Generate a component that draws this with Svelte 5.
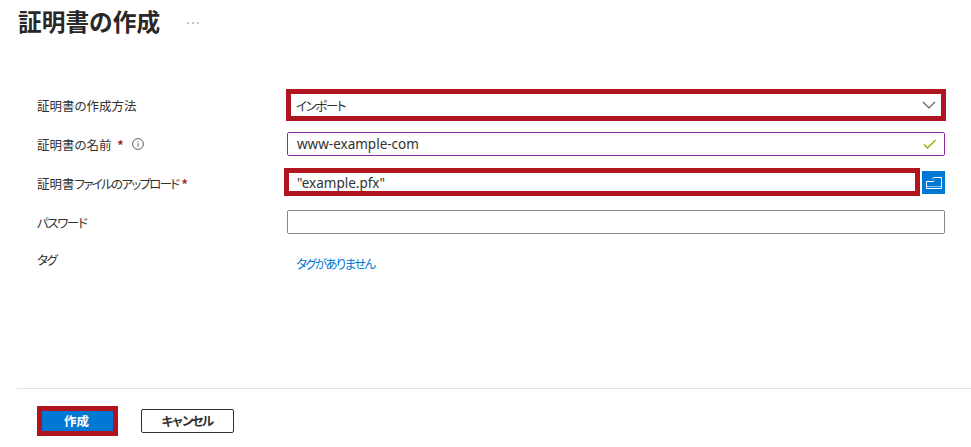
<script>
    const noTags = "タグがありません";
</script>

<main class="page">
    <header class="head">
        <h1>証明書の作成</h1>
        <button class="more" aria-label="その他">
            <svg width="12" height="2" viewBox="0 0 12 2"><circle cx="1" cy="1" r="0.7" /><circle cx="6" cy="1" r="0.7" /><circle cx="11" cy="1" r="0.7" /></svg>
        </button>
    </header>

    <form class="form">
        <div class="label">証明書の作成方法</div>
        <div class="field select">
            <span class="kana">インポート</span>
            <svg class="chev" width="14" height="8" viewBox="0 0 14 8"><path d="M1 1l6 6 6-6" /></svg>
            <i class="mark mark-select"></i>
        </div>

        <div class="label">
            証明書の名前 <b class="req">*</b>
            <svg class="info" width="12" height="12" viewBox="0 0 12 12">
                <circle cx="6" cy="6" r="5.4" />
                <path d="M6 5.2v3.6M6 3.2v1" />
            </svg>
        </div>
        <div class="field valid">
            <span>www-example-com</span>
            <svg class="check" width="13" height="10" viewBox="0 0 13 10"><path d="M1 5.5l3.5 3.5 8-8" /></svg>
        </div>

        <div class="label">証明書<span class="kana tight">ファイルのアップロード</span><b class="req near">*</b></div>
        <div class="file-row">
            <div class="field file">
                <span>"example.pfx"</span>
                <i class="mark mark-file"></i>
            </div>
            <button type="button" class="browse" aria-label="参照">
                <svg width="16" height="12" viewBox="0 0 16 12">
                    <path d="M.5 4.5h7l1-1M.5 4.5v7h15V.5h-8l-1 1.5" />
                    <path class="dim" d="M1 9.5h14" />
                </svg>
            </button>
        </div>

        <div class="label"><span class="kana">パスワード</span></div>
        <div class="field"></div>

        <div class="label tag-label"><span class="kana">タグ</span></div>
        <div class="tags"><a class="kana tight" href="#tags">{noTags}</a></div>
    </form>

    <footer class="foot">
        <button type="button" class="primary">作成<i class="mark mark-create"></i></button>
        <button type="button" class="cancel">キャンセル</button>
    </footer>
</main>

<style>
    :global(body) {
        background: #fff;
    }
    .page {
        width: 971px;
        height: 447px;
        display: flex;
        flex-direction: column;
        overflow: hidden;
        font-family: "Noto Sans", "Noto Sans CJK JP", sans-serif;
        font-size: 12.5px;
        color: #323130;
        font-feature-settings: "palt";
    }
    .kana {
        letter-spacing: -1.4px;
    }
    .tight {
        letter-spacing: -1.7px;
    }

    /**
        Page title
    **/
    .head {
        display: flex;
        align-items: center;
        gap: 27px;
        height: 43px;
        padding: 0 0 0 18px;
        margin-bottom: 50px;
    }
    h1 {
        margin: 0;
        font-family: "Noto Sans CJK JP", sans-serif;
        font-size: 23.7px;
        font-weight: 700;
        line-height: 43px;
        color: #292827;
        font-feature-settings: normal;
    }
    .more {
        display: flex;
        padding: 0;
        margin-top: 3px;
        border: none;
        background: none;
    }
    .more svg {
        fill: #605e5c;
    }

    /**
        Form rows
    **/
    .form {
        display: grid;
        grid-template-columns: 250px 658px;
        grid-auto-rows: 24px;
        row-gap: 15px;
        padding-left: 37px;
    }
    .label {
        display: flex;
        align-items: center;
        font-family: "Noto Sans CJK JP", sans-serif;
        white-space: pre;
    }
    .req {
        margin-left: 3px;
        font-weight: 700;
        color: #a4262c;
    }
    .near {
        margin-left: 3px;
    }
    .info {
        margin-left: 8px;
        fill: none;
        stroke: #605e5c;
        stroke-width: 1;
    }
    .field {
        position: relative;
        display: flex;
        align-items: center;
        justify-content: space-between;
        box-sizing: border-box;
        height: 24px;
        padding: 0 8px 0 9px;
        border: 1px solid #8a8886;
        border-radius: 2px;
        background: #fff;
        font-size: 13.5px;
    }
    .select {
        font-family: "Noto Sans CJK JP", sans-serif;
        font-size: 12.5px;
        padding-left: 8px;
        border-color: transparent;
    }
    .chev {
        fill: none;
        stroke: #605e5c;
        stroke-width: 1.1;
    }
    .valid {
        border-color: #8c2aa5;
    }
    .check {
        fill: none;
        stroke: #7fba00;
        stroke-width: 1.3;
    }
    .file-row {
        display: flex;
        justify-content: space-between;
    }
    .file {
        width: 632px;
        border-color: transparent;
    }
    .browse {
        display: flex;
        align-items: center;
        justify-content: center;
        width: 23px;
        height: 23px;
        padding: 0;
        border: none;
        background: #0078d4;
    }
    .browse svg {
        fill: none;
        stroke: #fff;
        stroke-width: 1;
    }
    .browse .dim {
        stroke: #8cc4ee;
    }
    .tags {
        font-family: "Noto Sans CJK JP", sans-serif;
        padding: 6px 0 0 9px;
        line-height: 18px;
    }
    .tags a {
        color: #0078d4;
        text-decoration: none;
    }
    .tag-label {
        align-items: flex-start;
        line-height: 22px;
    }

    /**
        Red annotation boxes laid over the controls
    **/
    .mark {
        position: absolute;
        box-sizing: border-box;
        border: 5px solid #b0141f;
        pointer-events: none;
    }
    .mark-select {
        inset: -5px -2px -5px -2px;
    }
    .mark-file {
        inset: -4px -2px -2px -4px;
    }
    .mark-create {
        inset: -3px;
    }

    /**
        Footer
    **/
    .foot {
        display: flex;
        align-items: center;
        gap: 26px;
        margin: 115px 0 0 17px;
        padding: 20px 0 0 23px;
        border-top: 1px solid #e1e1e1;
    }
    .foot button {
        font-family: "Noto Sans CJK JP", sans-serif;
        font-size: 12.5px;
        font-weight: 700;
        height: 24px;
        padding: 0 2px 2px 0;
        border-radius: 2px;
    }
    .primary {
        position: relative;
        width: 75px;
        border: none;
        background: #0078d4;
        color: #fff;
    }
    .cancel {
        width: 93px;
        box-sizing: border-box;
        border: 1px solid #323130;
        background: #fff;
        color: #323130;
        letter-spacing: -2.4px;
    }
</style>
